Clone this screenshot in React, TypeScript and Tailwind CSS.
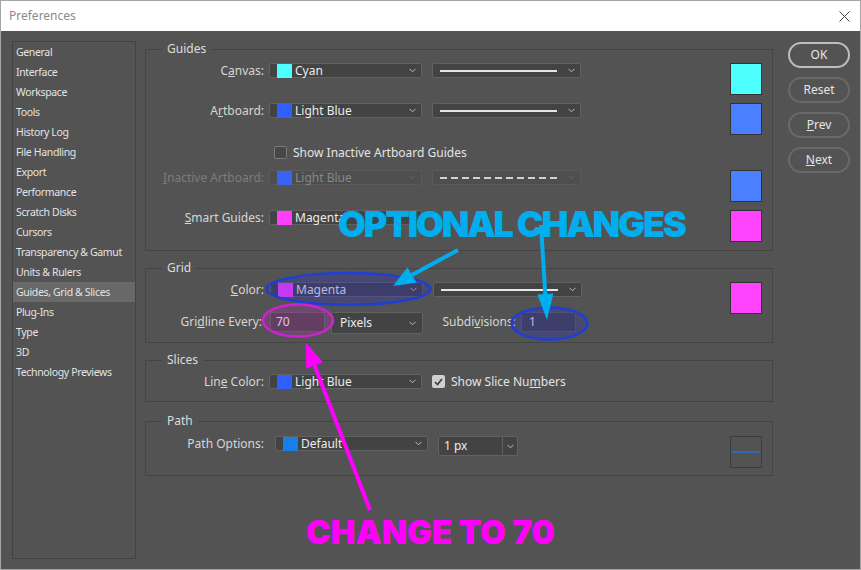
import React from "react";

const navItems = [
  "General",
  "Interface",
  "Workspace",
  "Tools",
  "History Log",
  "File Handling",
  "Export",
  "Performance",
  "Scratch Disks",
  "Cursors",
  "Transparency & Gamut",
  "Units & Rulers",
  "Guides, Grid & Slices",
  "Plug-Ins",
  "Type",
  "3D",
  "Technology Previews",
];

const Chevron = ({ dim = false }: { dim?: boolean }) => (
  <svg width="7" height="5" viewBox="0 0 7 5" className="shrink-0">
    <path
      d="M0.5 0.8 L3.5 3.8 L6.5 0.8"
      fill="none"
      stroke={dim ? "#6a6a6a" : "#bdbdbd"}
      strokeWidth="1"
    />
  </svg>
);

const Label = ({
  children,
  dim = false,
  w = "w-[118px]",
}: {
  children: React.ReactNode;
  dim?: boolean;
  w?: string;
}) => (
  <span
    className={`${w} shrink-0 text-right ${dim ? "text-[#7c7c7c]" : "text-[#d6d6d6]"}`}
  >
    {children}
  </span>
);

const ColorSelect = ({
  swatch,
  name,
  dim = false,
  className = "ml-[5px]",
}: {
  swatch: string;
  name: string;
  dim?: boolean;
  className?: string;
}) => (
  <div
    className={`${className} flex h-[15px] w-[153px] shrink-0 items-center rounded-[2px] border ${
      dim ? "border-[#5a5a5a] bg-[#4e4e4e]" : "border-[#616161] bg-[#434343]"
    }`}
  >
    <span className={`ml-[7px] h-[14px] w-[15px] shrink-0 ${swatch}`} />
    <span
      className={`ml-[3px] truncate leading-[15px] ${dim ? "text-[#878787]" : "text-[#ececec]"}`}
    >
      {name}
    </span>
    <span className="ml-auto mr-[5px]">
      <Chevron dim={dim} />
    </span>
  </div>
);

const LineSelect = ({ dashed = false }: { dashed?: boolean }) => (
  <div
    className={`ml-[10px] flex h-[15px] w-[149px] shrink-0 items-center rounded-[2px] border ${
      dashed ? "border-[#5a5a5a] bg-[#4e4e4e]" : "border-[#616161] bg-[#434343]"
    }`}
  >
    {dashed ? (
      <span className="ml-[7px] h-[2px] w-[117px] bg-[repeating-linear-gradient(90deg,#d2d2d2_0_7px,transparent_7px_11px)]" />
    ) : (
      <span className="ml-[7px] h-[2px] w-[117px] bg-[#e6e6e6]" />
    )}
    <span className="ml-auto mr-[5px]">
      <Chevron dim={dashed} />
    </span>
  </div>
);

const BigSwatch = ({ color }: { color: string }) => (
  <span
    className={`ml-auto mr-[10px] h-[32px] w-[32px] shrink-0 border border-[#333333] ${color}`}
  />
);

const Legend = ({ children }: { children: React.ReactNode }) => (
  <legend className="ml-[16px] px-[5px] text-[12px] leading-[14px] text-[#dcdcdc]">
    {children}
  </legend>
);

const PillButton = ({
  children,
  primary = false,
}: {
  children: React.ReactNode;
  primary?: boolean;
}) => (
  <div
    className={`flex h-[26px] w-[62px] items-center justify-center rounded-full border-2 text-[12px] text-[#e6e6e6] ${
      primary ? "border-[#bdbdbd]" : "border-[#696969]"
    }`}
  >
    {children}
  </div>
);

const Annotations = () => (
  <>
    <svg
      width="861"
      height="570"
      viewBox="0 0 861 570"
      className="pointer-events-none absolute left-0 top-0"
    >
      {/* ellipses */}
      <ellipse
        cx="347.5"
        cy="288"
        rx="82"
        ry="16"
        fill="rgba(45,45,210,0.28)"
        stroke="#1f3fd2"
        strokeWidth="2.5"
      />
      <ellipse
        cx="548.5"
        cy="322.5"
        rx="38"
        ry="16"
        fill="rgba(45,45,210,0.28)"
        stroke="#1f3fd2"
        strokeWidth="2.5"
      />
      <ellipse
        cx="297"
        cy="319.5"
        rx="35"
        ry="16"
        fill="rgba(210,40,210,0.22)"
        stroke="#d021d0"
        strokeWidth="2.5"
      />
      {/* cyan arrows */}
      <line x1="457" y1="249" x2="411" y2="274" stroke="#00aeef" strokeWidth="4" />
      <polygon points="392,285 415.5,281.8 406.5,266.2" fill="#00aeef" />
      <line x1="540" y1="224" x2="544.4" y2="295" stroke="#00aeef" strokeWidth="4" />
      <polygon points="546,319 552.4,292.6 536.4,293.6" fill="#00aeef" />
      {/* magenta arrow */}
      <line x1="369" y1="509" x2="313.6" y2="364.4" stroke="#ff00ff" strokeWidth="4" />
      <polygon points="305,342 322,361.2 305.2,367.6" fill="#ff00ff" />
    </svg>
    <div className="pointer-events-none absolute left-[337px] top-[205px] font-['Inter','Liberation_Sans',sans-serif] text-[36px] font-black leading-none tracking-[-2.2px] text-[#00aeef]">
      OPTIONAL CHANGES
    </div>
    <div className="pointer-events-none absolute left-[305px] top-[515px] font-['Inter','Liberation_Sans',sans-serif] text-[33px] font-black leading-none text-[#ff00ff]">
      CHANGE TO 70
    </div>
  </>
);

export default function App() {
  return (
    <div className="relative h-[570px] w-[861px] overflow-hidden border border-[#a6a6a6] font-['Noto_Sans',sans-serif] text-[12px]">
      {/* title bar */}
      <div className="flex h-[30px] items-center bg-white">
        <span className="ml-[8px] text-[12px] text-[#8a8a8a]">Preferences</span>
        <svg width="11" height="11" viewBox="0 0 11 11" className="ml-auto mr-[10px]">
          <path d="M0.5 0.5 L10.5 10.5 M10.5 0.5 L0.5 10.5" stroke="#444" strokeWidth="1" />
        </svg>
      </div>

      <div className="flex h-[538px] bg-[#535353] pb-[10px] pl-[11px] pr-[10px] pt-[10px]">
        {/* sidebar */}
        <div className="h-[518px] w-[124px] shrink-0 border border-[#434343] text-[10.5px] tracking-[-0.35px] text-[#e4e4e4]">
          {navItems.map((item) => (
            <div
              key={item}
              className={`h-[20px] pl-[3px] leading-[20px] ${
                item === "Guides, Grid & Slices" ? "bg-[#686868]" : ""
              }`}
            >
              {item}
            </div>
          ))}
        </div>

        {/* main */}
        <div className="ml-[9px] w-[628px] shrink-0 pt-[1px]">
          <fieldset className="border border-[#444444]">
            <Legend>Guides</Legend>
            <div className="pb-[8px] pt-[7px]">
              <div className="flex h-[32px] items-start">
                <div className="flex h-[15px] items-center">
                  <Label>
                    C<u>a</u>nvas:
                  </Label>
                  <ColorSelect swatch="bg-[#4dffff]" name="Cyan" />
                  <LineSelect />
                </div>
                <BigSwatch color="bg-[#4dffff]" />
              </div>
              <div className="mt-[8px] flex h-[32px] items-start">
                <div className="flex h-[15px] items-center">
                  <Label>
                    A<u>r</u>tboard:
                  </Label>
                  <ColorSelect swatch="bg-[#2f5fff]" name="Light Blue" />
                  <LineSelect />
                </div>
                <BigSwatch color="bg-[#4a80ff]" />
              </div>
              <div className="flex h-[35px] items-center pl-[128px]">
                <span className="h-[13px] w-[13px] rounded-[2px] border border-[#7a7a7a] bg-[#474747]" />
                <span className="ml-[6px] text-[#e4e4e4]">Show Inactive Artboard Guides</span>
              </div>
              <div className="flex h-[32px] items-start">
                <div className="flex h-[15px] items-center">
                  <Label dim>
                    <u>I</u>nactive Artboard:
                  </Label>
                  <ColorSelect swatch="bg-[#3a63f5]" name="Light Blue" dim />
                  <LineSelect dashed />
                </div>
                <BigSwatch color="bg-[#4a80ff]" />
              </div>
              <div className="mt-[8px] flex h-[32px] items-start">
                <div className="flex h-[15px] items-center">
                  <Label>
                    <u>S</u>mart Guides:
                  </Label>
                  <ColorSelect swatch="bg-[#ff3dff]" name="Magenta" />
                </div>
                <BigSwatch color="bg-[#ff44ff]" />
              </div>
            </div>
          </fieldset>

          <fieldset className="mt-[10px] border border-[#444444]">
            <Legend>Grid</Legend>
            <div className="flex pb-[8px] pt-[7px]">
              <div className="flex flex-col">
                <div className="flex h-[15px] items-center">
                  <Label>
                    <u>C</u>olor:
                  </Label>
                  <ColorSelect swatch="bg-[#ff3dff]" name="Magenta" className="ml-[6px]" />
                  <LineSelect />
                </div>
                <div className="mt-[15px] flex h-[22px] items-start">
                  <div className="flex h-[20px] items-center">
                    <Label w="w-[116px]">
                      Gri<u>d</u>line Every:
                    </Label>
                  </div>
                  <div className="ml-[8px] flex h-[20px] w-[55px] items-center border border-[#5e5e5e] bg-[#454545] pl-[5px] text-[#ececec]">
                    70
                  </div>
                  <div className="ml-[6px] flex h-[22px] w-[92px] items-center rounded-[2px] border border-[#616161] bg-[#434343] pl-[8px] text-[#ececec]">
                    Pixels
                    <span className="ml-auto mr-[6px]">
                      <Chevron />
                    </span>
                  </div>
                  <div className="flex h-[20px] items-center">
                    <Label w="w-[93px]">
                      Subdi<u>v</u>isions:
                    </Label>
                  </div>
                  <div className="ml-[5px] flex h-[20px] w-[55px] items-center border border-[#5e5e5e] bg-[#454545] pl-[7px] text-[#ececec]">
                    1
                  </div>
                </div>
              </div>
              <BigSwatch color="bg-[#ff44ff]" />
            </div>
          </fieldset>

          <fieldset className="mt-[10px] border border-[#444444]">
            <Legend>Slices</Legend>
            <div className="mb-[12px] mt-[7px] flex h-[15px] items-center">
              <Label>
                Lin<u>e</u> Color:
              </Label>
              <ColorSelect swatch="bg-[#2f5fff]" name="Light Blue" />
              <span className="ml-[10px] flex h-[13px] w-[13px] items-center justify-center rounded-[2px] bg-[#cfcfcf]">
                <svg width="9" height="8" viewBox="0 0 9 8">
                  <path d="M1 4 L3.5 6.5 L8 1" fill="none" stroke="#3a3a3a" strokeWidth="1.6" />
                </svg>
              </span>
              <span className="ml-[6px] text-[#e4e4e4]">
                Show Slice Nu<u>m</u>bers
              </span>
            </div>
          </fieldset>

          <fieldset className="mt-[12px] border border-[#444444]">
            <Legend>Path</Legend>
            <div className="flex items-start pb-[7px] pt-[8px]">
              <div className="flex h-[15px] items-center">
                <Label>Path Options:</Label>
                <ColorSelect swatch="bg-[#1a7ee8]" name="Default" className="ml-[11px]" />
              </div>
              <div className="ml-[10px] flex h-[20px] w-[80px] items-center rounded-[2px] border border-[#616161] bg-[#434343] text-[#ececec]">
                <span className="pl-[5px]">1 px</span>
                <span className="ml-auto flex h-full w-[15px] items-center justify-center border-l border-[#616161]">
                  <Chevron />
                </span>
              </div>
              <div className="ml-auto mr-[10px] flex h-[32px] w-[32px] items-center border border-[#3c3c3c]">
                <span className="mx-[1px] h-[2px] w-full bg-[#2b6cb0]" />
              </div>
            </div>
          </fieldset>
        </div>

        {/* buttons */}
        <div className="ml-[15px] flex w-[62px] shrink-0 flex-col gap-[9px] pt-[1px]">
          <PillButton primary>OK</PillButton>
          <PillButton>Reset</PillButton>
          <PillButton>
            <u>P</u>rev
          </PillButton>
          <PillButton>
            <u>N</u>ext
          </PillButton>
        </div>
      </div>

      <Annotations />
    </div>
  );
}
